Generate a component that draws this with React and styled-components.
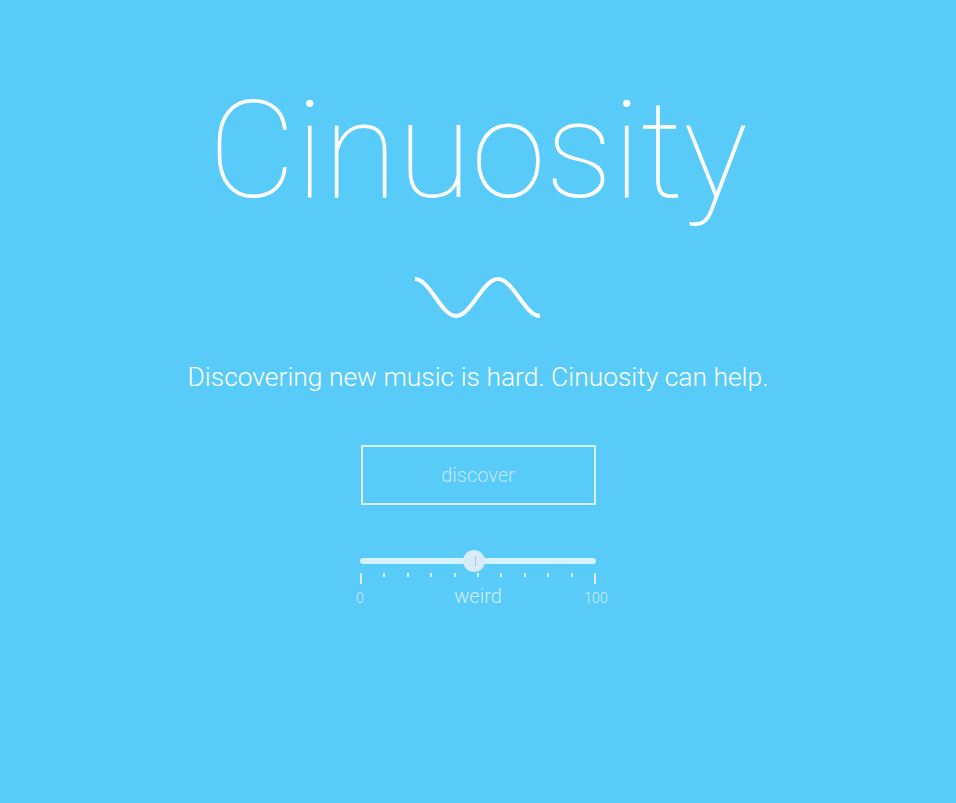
import React from "react";
import styled, { createGlobalStyle } from "styled-components";

const Global = createGlobalStyle`
  html, body { margin: 0; padding: 0; }
  body {
    background: #59cbf9;
    font-family: Roboto, "Noto Sans", "Liberation Sans", sans-serif;
    color: #ffffff;
  }
`;

const Page = styled.main`
  min-height: 803px;
  background: #59cbf9;
  display: flex;
  flex-direction: column;
  align-items: center;
  padding-top: 84px;
  box-sizing: border-box;
`;

const Title = styled.h1`
  margin: 0;
  font-size: 135px;
  font-weight: 100;
  line-height: 1;
  color: #ffffff;
  letter-spacing: 0;
`;

const Wave = styled.svg`
  display: block;
  margin-top: 57px;
  width: 130px;
  height: 44px;
`;

const Tagline = styled.p`
  margin: 42px 0 0;
  font-size: 26.4px;
  font-weight: 300;
  line-height: 30px;
  color: #ffffff;
`;

const DiscoverButton = styled.button`
  margin-top: 53px;
  width: 235px;
  height: 60px;
  background: transparent;
  border: 2px solid rgba(255, 255, 255, 0.75);
  color: rgba(255, 255, 255, 0.62);
  font-family: Roboto, "Noto Sans", sans-serif;
  font-size: 20px;
  font-weight: 300;
  cursor: pointer;
  padding: 0;
`;

const SliderBlock = styled.div`
  margin-top: 45px;
  width: 236px;
  display: flex;
  flex-direction: column;
`;

const Track = styled.div`
  position: relative;
  height: 22px;
  display: flex;
  align-items: center;
  &::before {
    content: "";
    display: block;
    width: 100%;
    height: 6px;
    border-radius: 3px;
    background: rgba(255, 255, 255, 0.75);
  }
`;

const Thumb = styled.div`
  position: absolute;
  top: 0;
  width: 22px;
  height: 22px;
  border-radius: 50%;
  background: #d6ecf6;
  transform: translateX(-50%);
  display: flex;
  align-items: center;
  justify-content: center;
  &::after {
    content: "";
    width: 1px;
    height: 10px;
    background: rgba(150, 180, 195, 0.7);
    margin-left: 2px;
  }
`;

const Ticks = styled.div`
  margin-top: 1px;
  display: flex;
  justify-content: space-between;
  align-items: flex-start;
`;

const Tick = styled.span`
  display: block;
  width: 2px;
  height: ${(p) => (p.$major ? 11 : 4)}px;
  background: rgba(255, 255, 255, 0.75);
`;

const Labels = styled.div`
  display: grid;
  grid-template-columns: 1fr auto 1fr;
  align-items: baseline;
  margin-top: 1px;
`;

const EndLabel = styled.span`
  font-size: 14px;
  font-weight: 300;
  color: rgba(255, 255, 255, 0.7);
  justify-self: ${(p) => (p.$end ? "end" : "start")};
  transform: translateX(${(p) => (p.$end ? "50%" : "-50%")});
`;

const SliderName = styled.span`
  font-size: 20px;
  font-weight: 300;
  color: rgba(255, 255, 255, 0.72);
  line-height: 22px;
`;

export default function App() {
  const value = 48.5;
  const ticks = Array.from({ length: 11 }, (_, i) => i);
  return (
    <>
      <Global />
      <Page>
        <Title>Cinuosity</Title>
        <Wave viewBox="0 0 130 44" aria-hidden="true">
          <path
            d="M2 3 C17 3, 28 40, 43 40 S 70 3, 85 3 S 112 40, 127 40"
            fill="none"
            stroke="#ffffff"
            strokeWidth="4"
          />
        </Wave>
        <Tagline>Discovering new music is hard. Cinuosity can help.</Tagline>
        <DiscoverButton>discover</DiscoverButton>
        <SliderBlock>
          <Track>
            <Thumb style={{ left: `${value}%` }} />
          </Track>
          <Ticks>
            {ticks.map((i) => (
              <Tick key={i} $major={i === 0 || i === 10} />
            ))}
          </Ticks>
          <Labels>
            <EndLabel>0</EndLabel>
            <SliderName>weird</SliderName>
            <EndLabel $end>100</EndLabel>
          </Labels>
        </SliderBlock>
      </Page>
    </>
  );
}
